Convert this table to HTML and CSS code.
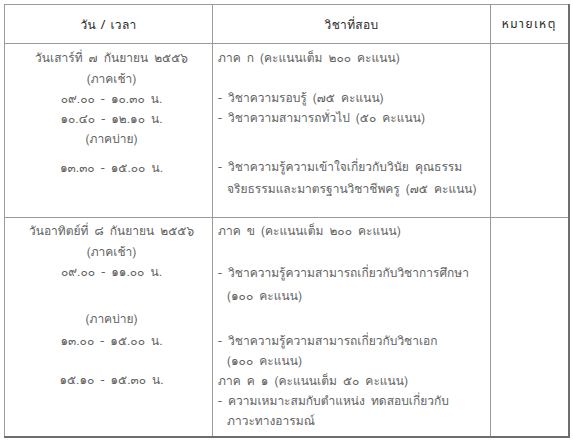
FILE: index.html
```html
<!DOCTYPE html>
<html lang="th">
<head>
<meta charset="utf-8">
<link rel="stylesheet" href="styles.css">
</head>
<body>
<table class="schedule">
  <colgroup>
    <col class="c-time">
    <col class="c-subject">
    <col class="c-note">
  </colgroup>
  <thead>
    <tr>
      <th>วัน / เวลา</th>
      <th>วิชาที่สอบ</th>
      <th class="note-head">หมายเหตุ</th>
    </tr>
  </thead>
  <tbody>
    <tr class="row1">
      <td class="time">
        <div class="ln">วันเสาร์ที่ ๗ กันยายน ๒๕๕๖</div>
        <div class="ln m1">(ภาคเช้า)</div>
        <div class="ln">๐๙.๐๐ - ๑๐.๓๐ น.</div>
        <div class="ln">๑๐.๔๐ - ๑๒.๑๐ น.</div>
        <div class="ln">(ภาคบ่าย)</div>
        <div class="ln m9">๑๓.๓๐ - ๑๕.๐๐ น.</div>
      </td>
      <td class="subject">
        <div class="ln">ภาค ก (คะแนนเต็ม ๒๐๐ คะแนน)</div>
        <div class="ln m20">- วิชาความรอบรู้ (๗๕ คะแนน)</div>
        <div class="ln">- วิชาความสามารถทั่วไป (๕๐ คะแนน)</div>
        <div class="ln m29">- วิชาความรู้ความเข้าใจเกี่ยวกับวินัย คุณธรรม</div>
        <div class="ln ind m2">จริยธรรมและมาตรฐานวิชาชีพครู (๗๕ คะแนน)</div>
      </td>
      <td></td>
    </tr>
    <tr class="row2">
      <td class="time">
        <div class="ln">วันอาทิตย์ที่ ๘ กันยายน ๒๕๕๖</div>
        <div class="ln m1">(ภาคเช้า)</div>
        <div class="ln">๐๙.๐๐ - ๑๑.๐๐ น.</div>
        <div class="ln m27">(ภาคบ่าย)</div>
        <div class="ln m2">๑๓.๐๐ - ๑๕.๐๐ น.</div>
        <div class="ln m19">๑๕.๑๐ - ๑๕.๓๐ น.</div>
      </td>
      <td class="subject">
        <div class="ln">ภาค ข (คะแนนเต็ม ๒๐๐ คะแนน)</div>
        <div class="ln m22">- วิชาความรู้ความสามารถเกี่ยวกับวิชาการศึกษา</div>
        <div class="ln ind m3">(๑๐๐ คะแนน)</div>
        <div class="ln m25">- วิชาความรู้ความสามารถเกี่ยวกับวิชาเอก</div>
        <div class="ln ind">(๑๐๐ คะแนน)</div>
        <div class="ln">ภาค ค ๑ (คะแนนเต็ม ๕๐ คะแนน)</div>
        <div class="ln">- ความเหมาะสมกับตำแหน่ง ทดสอบเกี่ยวกับ</div>
        <div class="ln ind">ภาวะทางอารมณ์</div>
      </td>
      <td></td>
    </tr>
  </tbody>
</table>
</body>
</html>
```

FILE: styles.css
```css
html, body {
  margin: 0;
  padding: 0;
  background: #ffffff;
}
body {
  padding: 4px 0 0 4px;
  font-family: "Loma", "Noto Sans Thai", "Noto Sans", sans-serif;
  font-size: 12px;
  word-spacing: 2px;
  color: #626262;
}
.schedule {
  border-collapse: collapse;
  width: 564px;
  table-layout: fixed;
  border-top: 1px solid #9a9a9a;
  border-left: 1px solid #9a9a9a;
  border-right: 2px solid #6e6e6e;
  border-bottom: 2px solid #6e6e6e;
}
.c-time { width: 208px; }
.c-subject { width: 278px; }
.c-note { width: 78px; }
.schedule th,
.schedule td {
  border: 1px solid #9a9a9a;
  padding: 0;
  vertical-align: top;
}
.schedule th {
  height: 38px;
  vertical-align: middle;
  font-weight: normal;
  color: #2a2a2a;
  text-align: center;
  letter-spacing: 0.3px;
  word-spacing: 1px;
}
.note-head {
  font-family: "Noto Sans Thai", "Noto Sans", sans-serif;
  font-size: 12px;
  letter-spacing: 1.5px !important;
}
.row1 td { height: 169px; }
.row2 td { height: 215px; }
.ln {
  line-height: 20px;
  height: 20px;
  white-space: nowrap;
}
.time {
  text-align: center;
  padding-top: 4px !important;
}
.time .ln { padding-left: 6px; }
.subject {
  padding: 4px 0 0 5px !important;
}
.row2 .time,
.row2 .subject { padding-top: 3px !important; }
.ind { padding-left: 9px; }
.m1 { margin-top: 1px; }
.m2 { margin-top: 2px; }
.m3 { margin-top: 3px; }
.m9 { margin-top: 9px; }
.m19 { margin-top: 19px; }
.m20 { margin-top: 20px; }
.m22 { margin-top: 22px; }
.m25 { margin-top: 25px; }
.m27 { margin-top: 27px; }
.m29 { margin-top: 29px; }
```
